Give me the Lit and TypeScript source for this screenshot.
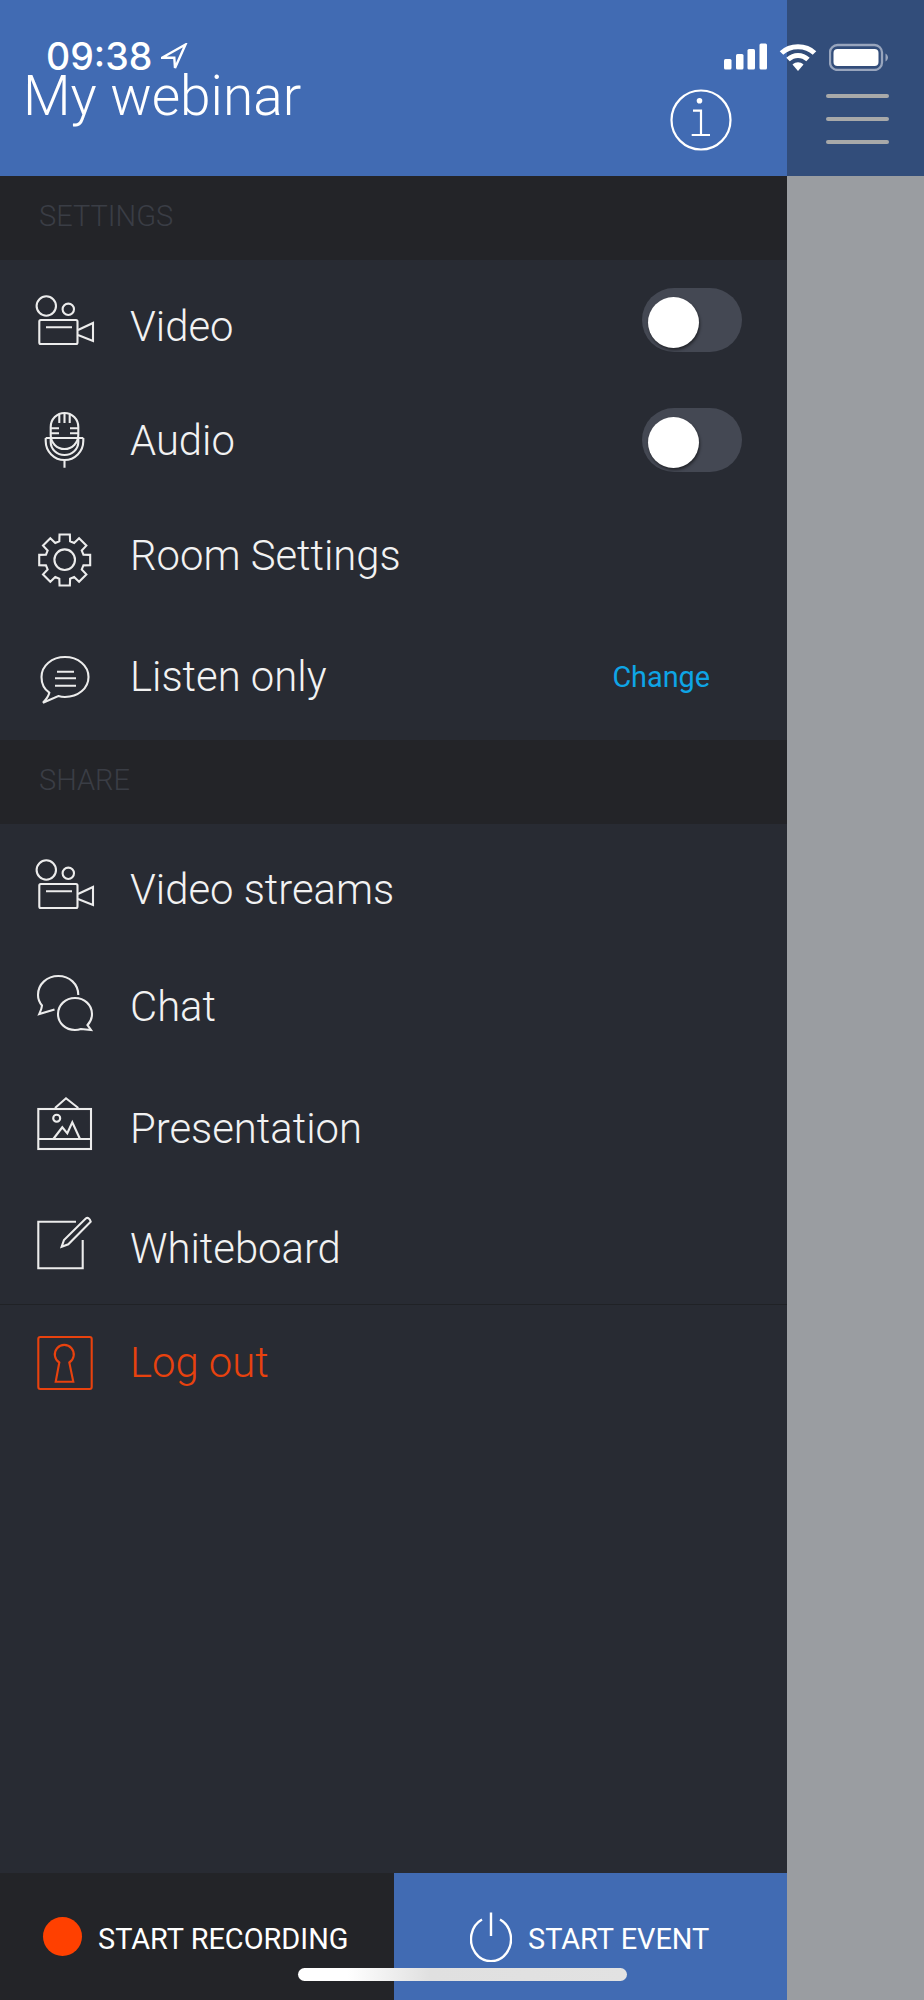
import { LitElement, html, css, svg } from "lit";
import { customElement } from "lit/decorators.js";

function gearPath(): string {
  const cx = 34.7, cy = 35, teeth = 8, ro = 26, ri = 19.5;
  const pts: string[] = [];
  for (let i = 0; i < teeth; i++) {
    const a = (i * 2 * Math.PI) / teeth - Math.PI / 2;
    const p = (r: number, d: number) => {
      const t = a + d;
      return `${(cx + r * Math.cos(t)).toFixed(2)},${(cy + r * Math.sin(t)).toFixed(2)}`;
    };
    pts.push(p(ri, -0.28), p(ro, -0.2), p(ro, 0.2), p(ri, 0.28));
  }
  return `M${pts.join(" L")} Z`;
}

const camera = svg`
  <circle cx="16.300" cy="21" r="9.700"/><circle cx="38.300" cy="24.300" r="5.700"/>
  <rect x="9.3" y="35" width="38.2" height="24" rx="1.5"/>
  <path d="M16 42.3H42M48 45L63 38V56L48 50"/>`;

const icons: Record<string, unknown> = {
  video: camera,
  streams: camera,
  mic: svg`
    <path d="M20.700 22a13.800 14 0 0 1 27.600 0V30a13.800 14 0 0 1-27.600 0Z"/>
    <path d="M15.700 33H53.300M15.700 33V36a18.800 19 0 0 0 37.600 0V33M20.700 33V37a13.800 13 0 0 0 27.600 0V33"/>
    <path d="M34.500 55V62.700M20.700 23.300H29M40 23.300H48.300M20.700 28.300H29M40 28.300H48.300M29.300 10V18M34.500 9V18M39.700 10V18"/>`,
  gear: svg`<path d=${gearPath()}/><circle cx="34.700" cy="34.700" r="10.300"/>`,
  listen: svg`
    <path d="M19.300 47.700C14 44 11.500 38.500 11.500 32C11.500 20.500 22 12 35 12S58.500 20.500 58.500 32S48 52 35 52C32.500 52 30.500 51.700 28.300 51L13 57.700C16 54.500 18.500 51.500 19.300 47.700Z"/>
    <path d="M27 26.700H44M25 33.300H46M25 40.700H46"/>`,
  chat: svg`
    <path d="M48.300 26C48.300 15 39.500 7 28.300 7S8 15 8 26C8 30 9.500 33.500 12 36.500C11.800 39.500 10.500 42.500 9.300 45L24.500 40.500"/>
    <path d="M28 45C28 36 35.500 29 45 29S62 36 62 45C62 49.500 60 53.500 57.500 56L61 61L51 60C49 60.700 47 61 45 61C35.500 61 28 54 28 45Z"/>`,
  presentation: svg`
    <rect x="8.300" y="20" width="52.700" height="40"/>
    <path d="M8.300 50H61M25 19L36 9.300L48.300 19"/>
    <circle cx="26.700" cy="29.300" r="3.500"/>
    <path d="M23.300 50L32.300 38.300L37.300 44.300L42.300 33.300L50 50"/>`,
  whiteboard: svg`
    <path d="M46 12.700H8.300V59.300H52.700V31"/>
    <path d="M31.700 37.700L34 31L56 9.300C58 8 60 10 60.700 12.700L38.300 35.300Z"/>`,
  logout: svg`
    <rect x="8.300" y="9" width="53.400" height="52" rx="2"/>
    <path d="M29.300 34.500A9.500 9.500 0 1 1 39.300 34.500L43.300 53.700H25.700Z"/>`,
};

function icon(name: string, red = false) {
  return html`<svg class="ico ${red ? "red" : ""}" viewBox="0 0 70 70" aria-hidden="true">${icons[name]}</svg>`;
}

type Row = { icon: string; label: string; toggle?: boolean; link?: string; shift: number };

const settings: Row[] = [
  { icon: "video", label: "Video", toggle: true, shift: 14 },
  { icon: "mic", label: "Audio", toggle: true, shift: 2 },
  { icon: "gear", label: "Room Settings", shift: -8 },
  { icon: "listen", label: "Listen only", link: "Change", shift: -7 },
];
const share: Row[] = [
  { icon: "streams", label: "Video streams", shift: 12 },
  { icon: "chat", label: "Chat", shift: 6 },
  { icon: "presentation", label: "Presentation", shift: 10 },
  { icon: "whiteboard", label: "Whiteboard", shift: 9 },
];

@customElement("app-root")
export class AppRoot extends LitElement {
  static styles = css`
    :host {
      display: block;
      width: 924px;
      height: 2000px;
      font-family: Roboto, "Liberation Sans", sans-serif;
    }
    .page {
      position: relative;
      display: flex;
      width: 924px;
      height: 2000px;
      overflow: hidden;
      background: #9a9da1;
    }
    .drawer {
      width: 787px;
      flex: none;
      display: flex;
      flex-direction: column;
      background: #282b33;
    }
    .side {
      flex: 1;
      display: flex;
      flex-direction: column;
    }
    .side-top {
      height: 176px;
      background: #324d7a;
      display: flex;
      flex-direction: column;
      align-items: flex-end;
      gap: 19px;
      padding: 94px 35px 0 0;
      box-sizing: border-box;
    }
    .side-top i {
      display: block;
      width: 63px;
      height: 4px;
      border-radius: 2px;
      background: #a8a9a9;
    }
    .head {
      height: 176px;
      flex: none;
      box-sizing: border-box;
      background: #416bb3;
      display: flex;
      justify-content: space-between;
      align-items: flex-start;
      padding: 73px 55px 0 23px;
    }
    .title {
      margin: 0;
      font-size: 55px;
      line-height: 46px;
      font-weight: 300;
      color: #fff;
    }
    .info {
      width: 62px;
      height: 62px;
      margin-top: 16px;
      fill: none;
      stroke: #fff;
      stroke-width: 2.2;
    }
    .section {
      height: 84px;
      flex: none;
      box-sizing: border-box;
      background: #232428;
      color: #3a3d45;
      font-size: 29px;
      font-weight: 300;
      line-height: 80px;
      padding-left: 39px;
    }
    .row {
      height: 120px;
      flex: none;
      display: flex;
      align-items: center;
      padding-left: 30px;
      padding-right: 45px;
      box-sizing: border-box;
      color: #f2f2f2;
    }
    .row.out {
      height: 116px;
      color: #e8420e;
    }
    .ico {
      width: 70px;
      height: 70px;
      flex: none;
      margin-right: 30px;
      fill: none;
      stroke: #ececec;
      stroke-width: 2.1;
    }
    .ico.red { stroke: #e8420e; }
    .label {
      flex: 1;
      font-size: 41.8px;
      font-weight: 300;
      line-height: 60px;
      white-space: nowrap;
    }
    .link {
      color: #0ea5e6;
      font-size: 28.8px;
      font-weight: 400;
      margin: 0 32px 6px 0;
    }
    .toggle {
      width: 100px;
      height: 64px;
      border-radius: 32px;
      background: #444853;
      display: flex;
      align-items: center;
      padding-left: 6px;
      box-sizing: border-box;
    }
    .toggle span {
      display: block;
      width: 51px;
      height: 51px;
      margin-top: 4px;
      border-radius: 50%;
      background: #fff;
      box-shadow: 1px 2px 3px rgba(0, 0, 0, 0.5);
    }
    .rule {
      height: 1px;
      flex: none;
      background: #202226;
    }
    .spacer { flex: 1; }
    .bottom {
      height: 127px;
      flex: none;
      display: flex;
      color: #fff;
      font-size: 28.9px;
      font-weight: 400;
    }
    .bottom .txt { padding-top: 5px; }
    .rec {
      width: 394px;
      box-sizing: border-box;
      background: #232428;
      display: flex;
      align-items: center;
      gap: 16px;
      padding: 0 0 0 43px;
    }
    .dot {
      width: 39px;
      height: 39px;
      border-radius: 50%;
      background: #ff4000;
    }
    .start {
      flex: 1;
      background: #416bb3;
      display: flex;
      align-items: center;
      gap: 16px;
      padding-left: 76px;
    }
    .power {
      width: 42px;
      height: 50px;
      fill: none;
      stroke: #fff;
      stroke-width: 2.4;
    }
    .status {
      position: absolute;
      left: 0;
      top: 0;
      width: 924px;
      height: 72px;
      display: flex;
      align-items: flex-start;
      padding: 42px 36px 0 46px;
      box-sizing: border-box;
      color: #fff;
    }
    .time {
      font-family: Inter, Roboto, sans-serif;
      font-size: 37.5px;
      font-weight: 500;
      line-height: 30px;
    }
    .arrow {
      width: 28px;
      height: 28px;
      margin: 1px 0 0 9px;
      fill: none;
      stroke: #fff;
      stroke-width: 2.4;
    }
    .status-right {
      margin-left: auto;
      display: flex;
      gap: 12px;
      padding-top: 1px;
    }
    .status-right svg { height: 28px; display: block; }
    .home {
      position: absolute;
      left: 298px;
      top: 1968px;
      width: 329px;
      height: 13px;
      border-radius: 7px;
      background: linear-gradient(90deg, #fff 0%, #fff 15%, #e0e0e0 40%, #e2e2e2 100%);
    }
  `;

  private renderRow(r: Row) {
    return html`<div class="row">
      ${icon(r.icon)}
      <div class="label" style="padding-top:${Math.max(r.shift, 0)}px;padding-bottom:${Math.max(-r.shift, 0)}px">${r.label}</div>
      ${r.toggle ? html`<div class="toggle"><span></span></div>` : ""}
      ${r.link ? html`<div class="link">${r.link}</div>` : ""}
    </div>`;
  }

  render() {
    return html`<div class="page">
      <div class="drawer">
        <header class="head">
          <h1 class="title">My webinar</h1>
          <svg class="info" viewBox="0 0 62 62">
            <circle cx="31" cy="31" r="29.5"/>
            <circle cx="29.500" cy="11.700" r="2.800" fill="#fff" stroke="none"/>
            <path d="M23 21.700H31V46M21.700 46H40"/>
          </svg>
        </header>
        <div class="section">SETTINGS</div>
        ${settings.map((r) => this.renderRow(r))}
        <div class="section">SHARE</div>
        ${share.map((r) => this.renderRow(r))}
        <div class="rule"></div>
        <div class="row out">
          ${icon("logout", true)}
          <div class="label">Log out</div>
        </div>
        <div class="spacer"></div>
        <footer class="bottom">
          <div class="rec"><span class="dot"></span><span class="txt">START RECORDING</span></div>
          <div class="start">
            <svg class="power" viewBox="0 0 42 50">
              <path d="M12 7.500A20 22 0 1 0 30 7.500M21 0.500V24"/>
            </svg>
            <span class="txt">START EVENT</span>
          </div>
        </footer>
      </div>
      <div class="side">
        <div class="side-top"><i></i><i></i><i></i></div>
      </div>
      <div class="status">
        <span class="time">09:38</span>
        <svg class="arrow" viewBox="0 0 28 28"><path d="M24.500 1.500L1 14.700H13.300L14 25Z"/></svg>
        <div class="status-right">
          <svg viewBox="0 0 43 28" width="43">
            <g fill="#fff">
              <rect x="0" y="16" width="7.500" height="10.500" rx="1.500"/>
              <rect x="12" y="11" width="7.500" height="15.500" rx="1.500"/>
              <rect x="23.500" y="6" width="7.500" height="20.500" rx="1.500"/>
              <rect x="35.500" y="0.500" width="7.500" height="26" rx="1.500"/>
            </g>
          </svg>
          <svg viewBox="0 0 38 28" width="38" fill="none" stroke="#fff" stroke-width="5">
            <path d="M2.500 10C11 1.500 27 1.500 35.500 10M9 16.500C15 11 23 11 29 16.500"/>
            <path d="M13.500 21.500C17 18.500 21 18.500 24.500 21.500L19 28Z" fill="#fff" stroke="none"/>
          </svg>
          <svg viewBox="0 0 59 28" width="59">
            <rect x="1" y="2" width="52" height="25" rx="7.500" fill="none" stroke="#98a5bd" stroke-width="2.300"/>
            <rect x="4.500" y="6" width="45" height="17" rx="4" fill="#fff"/>
            <path d="M56.500 10.500C58 11.500 59 13 59 14.500S58 17.500 56.500 18.500Z" fill="#98a5bd"/>
          </svg>
        </div>
      </div>
      <div class="home"></div>
    </div>`;
  }
}
